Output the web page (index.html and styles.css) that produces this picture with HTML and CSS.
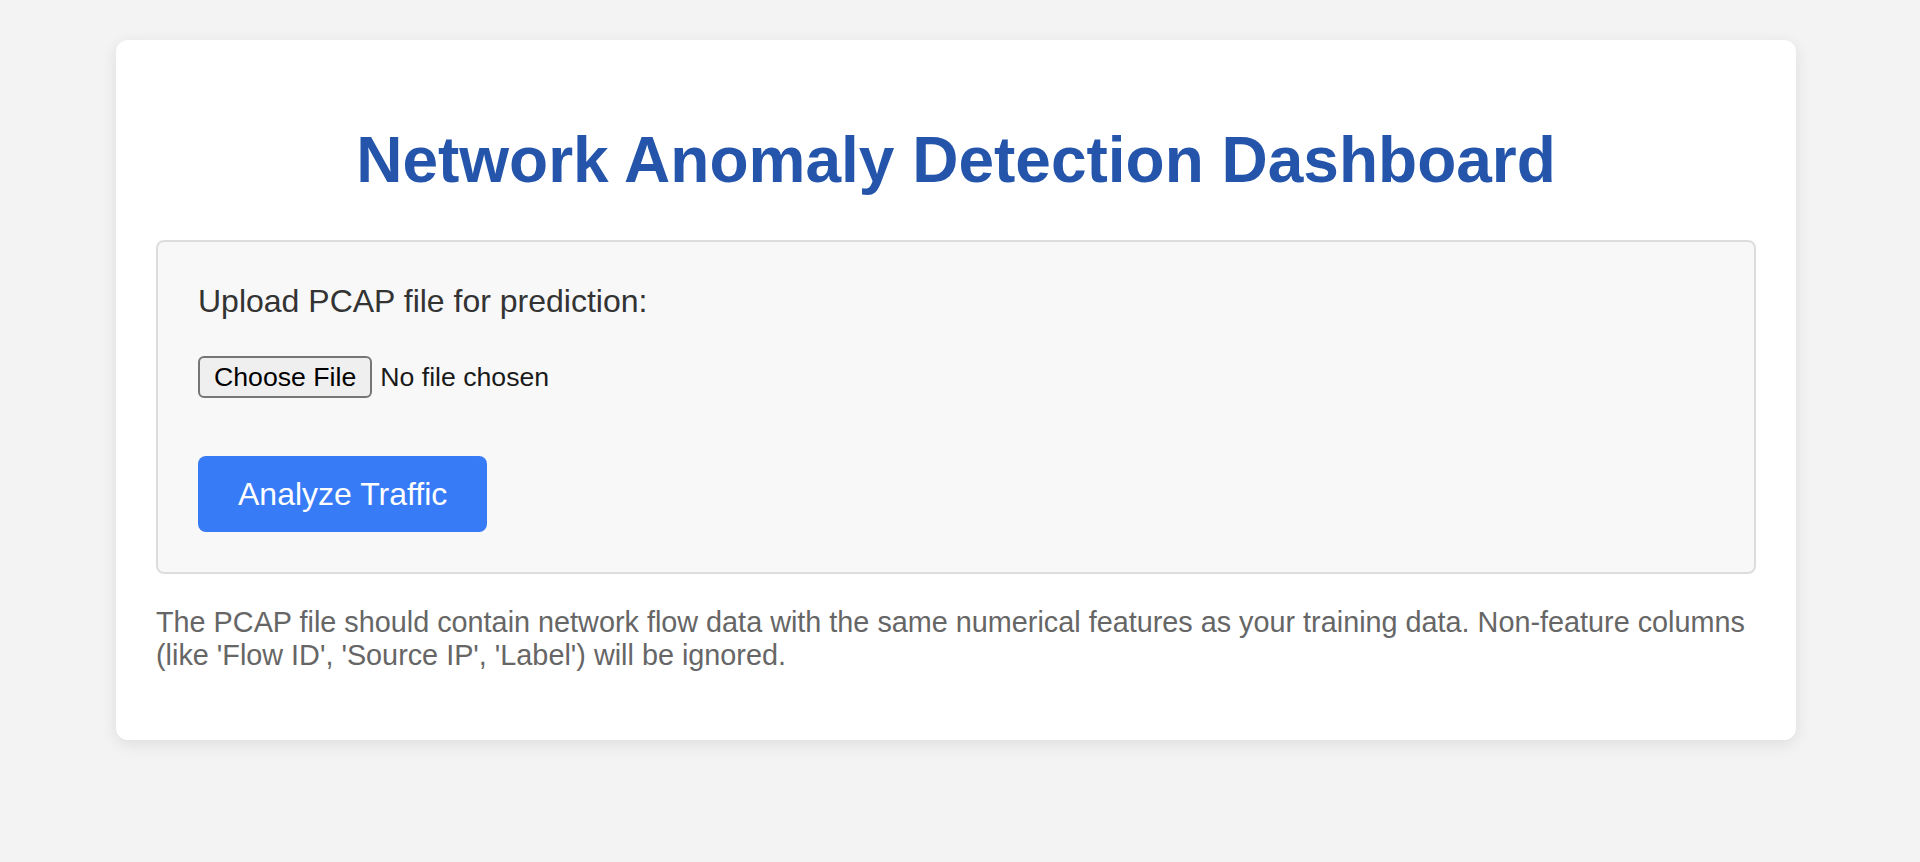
FILE: index.html
```html
<!DOCTYPE html>
<html lang="en">
<head>
<meta charset="utf-8">
<title>Network Anomaly Detection Dashboard</title>
<link rel="stylesheet" href="styles.css">
</head>
<body>
<main class="card">
  <h1 class="title">Network Anomaly Detection Dashboard</h1>
  <form class="upload-box">
    <label class="upload-label" for="pcap">Upload PCAP file for prediction:</label>
    <div class="file-row">
      <span class="file-btn">Choose File</span>
      <span class="file-name">No file chosen</span>
    </div>
    <button type="button" class="analyze-btn">Analyze Traffic</button>
  </form>
  <p class="note">The PCAP file should contain network flow data with the same numerical features as your training data. Non-feature columns (like 'Flow ID', 'Source IP', 'Label') will be ignored.</p>
</main>
</body>
</html>
```
FILE: styles.css
```css
html, body {
  margin: 0;
  padding: 0;
}

body {
  background: #f3f3f3;
  font-family: "Liberation Sans", Arial, Helvetica, sans-serif;
  min-height: 862px;
}

.card {
  display: block;
  box-sizing: border-box;
  width: 1680px;
  margin: 40px 0 0 116px;
  padding: 40px;
  background: #ffffff;
  border-radius: 12px;
  box-shadow: 0 4px 16px rgba(0, 0, 0, 0.09);
}

.title {
  margin: 43px 0;
  font-size: 64px;
  font-weight: bold;
  line-height: normal;
  text-align: center;
  color: #2455ab;
}

.upload-box {
  display: flex;
  flex-direction: column;
  align-items: flex-start;
  padding: 40px;
  background: #f8f8f8;
  border: 2px solid #dddddd;
  border-radius: 8px;
}

.upload-label {
  display: block;
  margin-top: 1px;
  margin-bottom: 36px;
  font-size: 32px;
  line-height: normal;
  color: #333333;
}

.file-row {
  display: flex;
  align-items: center;
  gap: 8px;
  height: 42px;
  margin-bottom: 58px;
}

.file-btn {
  display: flex;
  align-items: center;
  box-sizing: border-box;
  height: 42px;
  padding: 0 14px;
  background: #efefef;
  border: 2px solid #767676;
  border-radius: 6px;
  font-size: 26.67px;
  color: #000000;
}

.file-name {
  font-size: 26.67px;
  color: #1a1a1a;
}

.analyze-btn {
  padding: 20px 40px;
  font-family: inherit;
  font-size: 32px;
  line-height: 36px;
  color: #ffffff;
  background: #387bf6;
  border: none;
  border-radius: 8px;
}

.note {
  margin: 32px 0 28px;
  font-size: 28.8px;
  line-height: normal;
  color: #666666;
}
```
